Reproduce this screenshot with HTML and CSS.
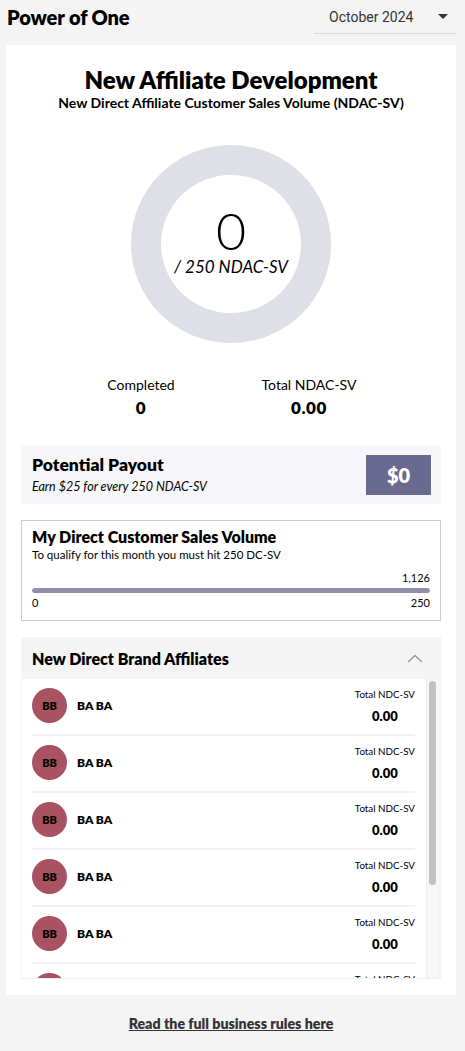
FILE: index.html
```html
<!DOCTYPE html>
<html>
<head>
<meta charset="utf-8">
<link rel="stylesheet" href="styles.css">
</head>
<body>
<header class="top">
  <h1 class="brand">Power of One</h1>
  <div class="month">
    <span class="month-label">October 2024</span>
    <svg class="caret" width="10" height="5" viewBox="0 0 10 5"><path d="M0 0h10L5 5z" fill="#333"/></svg>
  </div>
</header>

<main class="card">
  <h2 class="title">New Affiliate Development</h2>
  <p class="subtitle">New Direct Affiliate Customer Sales Volume (NDAC-SV)</p>

  <div class="donut">
    <div class="donut-inner">
      <span class="donut-value">0</span>
      <span class="donut-goal">/ 250 NDAC-SV</span>
    </div>
  </div>

  <div class="stats">
    <div class="stat">
      <span class="stat-label">Completed</span>
      <span class="stat-value">0</span>
    </div>
    <div class="stat">
      <span class="stat-label">Total NDAC-SV</span>
      <span class="stat-value">0.00</span>
    </div>
  </div>

  <section class="payout">
    <div class="payout-text">
      <h3 class="payout-title">Potential Payout</h3>
      <p class="payout-note">Earn $25 for every 250 NDAC-SV</p>
    </div>
    <div class="payout-amount">$0</div>
  </section>

  <section class="volume">
    <h3 class="volume-title">My Direct Customer Sales Volume</h3>
    <p class="volume-note">To qualify for this month you must hit 250 DC-SV</p>
    <div class="volume-current">1,126</div>
    <div class="bar"><div class="bar-fill" style="width:100%"></div></div>
    <div class="bar-scale"><span>0</span><span>250</span></div>
  </section>

  <section class="aff">
    <div class="aff-head">
      <h3 class="aff-title">New Direct Brand Affiliates</h3>
      <svg class="chev" width="16" height="9" viewBox="0 0 16 9"><path d="M1 8L8 1.5L15 8" fill="none" stroke="#9a9a9a" stroke-width="1.6"/></svg>
    </div>
    <div class="aff-body">
      <div class="aff-list">
        <div class="row"><div class="avatar">BB</div><div class="name">BA BA</div><div class="sv"><span class="sv-label">Total NDC-SV</span><span class="sv-value">0.00</span></div></div>
        <div class="row"><div class="avatar">BB</div><div class="name">BA BA</div><div class="sv"><span class="sv-label">Total NDC-SV</span><span class="sv-value">0.00</span></div></div>
        <div class="row"><div class="avatar">BB</div><div class="name">BA BA</div><div class="sv"><span class="sv-label">Total NDC-SV</span><span class="sv-value">0.00</span></div></div>
        <div class="row"><div class="avatar">BB</div><div class="name">BA BA</div><div class="sv"><span class="sv-label">Total NDC-SV</span><span class="sv-value">0.00</span></div></div>
        <div class="row"><div class="avatar">BB</div><div class="name">BA BA</div><div class="sv"><span class="sv-label">Total NDC-SV</span><span class="sv-value">0.00</span></div></div>
        <div class="row"><div class="avatar">BB</div><div class="name">BA BA</div><div class="sv"><span class="sv-label">Total NDC-SV</span><span class="sv-value">0.00</span></div></div>
      </div>
      <div class="track"><div class="thumb"></div></div>
    </div>
  </section>
</main>

<footer class="foot">
  <a class="rules" href="#">Read the full business rules here</a>
</footer>
</body>
</html>
```

FILE: styles.css
```css
* { box-sizing: border-box; }
html, body { margin: 0; padding: 0; }
body {
  background: #f4f4f4;
  font-family: "Lato", "Liberation Sans", sans-serif;
  color: #000;
  padding: 0 9px 0 6px;
}
h1, h2, h3, p { margin: 0; }

.top {
  display: flex;
  justify-content: space-between;
  align-items: flex-start;
  height: 45px;
}
.brand {
  font-size: 20px;
  font-weight: 800;
  margin: 5px 0 0 1px;
  letter-spacing: -0.1px;
}
.month {
  width: 142px;
  height: 34px;
  border-bottom: 1px solid #dcdcdc;
  display: flex;
  align-items: center;
  justify-content: space-between;
  padding: 0 8px 0 15px;
}
.month-label {
  font-family: "Roboto", "Liberation Sans", sans-serif;
  font-size: 14px;
  color: #333;
  padding-top: 1px;
}
.caret { margin-top: -1px; }

.card {
  background: #fff;
  padding: 21px 15px 16px;
  display: flex;
  flex-direction: column;
  align-items: stretch;
  height: 950px;
}
.title {
  text-align: center;
  font-size: 24px;
  font-weight: 800;
  line-height: 28px;
}
.subtitle {
  text-align: center;
  font-size: 14px;
  font-weight: 700;
  line-height: 17px;
  margin-top: 0;
}

.donut {
  width: 200px;
  height: 200px;
  border-radius: 50%;
  border: 30px solid #dfe0e7;
  margin: 34px auto 0;
  display: flex;
  align-items: center;
  justify-content: center;
}
.donut-inner {
  display: flex;
  flex-direction: column;
  align-items: center;
  margin-top: -6px;
}
.donut-value {
  font-size: 52px;
  font-weight: 300;
  line-height: 50px;
}
.donut-goal {
  font-size: 17px;
  font-style: italic;
  line-height: 20px;
  margin-top: 2px;
}

.stats {
  display: flex;
  justify-content: center;
  gap: 38px;
  padding-right: 12px;
  margin-top: 34px;
}
.stat {
  width: 130px;
  display: flex;
  flex-direction: column;
  align-items: center;
}
.stat-label { font-size: 14px; line-height: 16px; }
.stat-value { font-size: 17px; font-weight: 800; line-height: 18px; margin-top: 6px; letter-spacing: 0.6px; }

.payout {
  margin-top: 28px;
  background: #f7f7f9;
  height: 60px;
  display: flex;
  align-items: center;
  justify-content: space-between;
  padding: 0 10px 0 11px;
}
.payout-title { font-size: 17.5px; font-weight: 800; line-height: 20px; }
.payout-note { font-size: 12.5px; font-style: italic; line-height: 14px; margin-top: 5px; }
.payout-amount {
  width: 65px;
  height: 40px;
  background: #6a6a91;
  color: #fff;
  font-size: 20px;
  font-weight: 800;
  display: flex;
  align-items: center;
  justify-content: center;
}

.volume {
  margin-top: 16px;
  border: 1px solid #cccccc;
  height: 102px;
  padding: 6px 10px 0 10px;
}
.volume-title { font-size: 16px; font-weight: 800; line-height: 19px; }
.volume-note { font-size: 11.5px; line-height: 13px; margin-top: 2px; }
.volume-current { text-align: right; font-size: 11px; line-height: 13px; margin-top: 10px; }
.bar {
  height: 5px;
  background: #e4e4ec;
  border-radius: 3px;
  margin-top: 4px;
  overflow: hidden;
}
.bar-fill { height: 100%; background: #9090ad; border-radius: 3px; }
.bar-scale {
  display: flex;
  justify-content: space-between;
  font-size: 11px;
  line-height: 13px;
  margin-top: 3px;
}

.aff {
  margin-top: 16px;
  background: #f4f4f4;
  padding: 0 3px 0 1px;
  border-bottom: 1px solid #eeeeee;
}
.aff-head {
  height: 42px;
  display: flex;
  align-items: center;
  justify-content: space-between;
  padding: 0 15px 0 10px;
}
.aff-title { font-size: 16px; font-weight: 800; }
.aff-body {
  display: flex;
  background: #fff;
  height: 299px;
}
.aff-list {
  flex: 1;
  overflow: hidden;
  padding: 0 11px 0 10px;
}
.track {
  width: 12px;
  background: #f7f7f7;
  border-left: 1px solid #ececec;
  padding: 2px 2px 0 2px;
}
.thumb {
  height: 204px;
  background: #c1c1c1;
  border-radius: 4px;
}
.row {
  display: flex;
  align-items: center;
  padding: 9px 0 11px;
  border-bottom: 2px solid #f2f2f2;
}
.avatar {
  width: 35px;
  height: 35px;
  border-radius: 50%;
  background: #a95262;
  font-size: 11px;
  font-weight: 800;
  display: flex;
  align-items: center;
  justify-content: center;
  flex-shrink: 0;
}
.name {
  flex: 1;
  font-size: 12px;
  font-weight: 800;
  margin-left: 10px;
}
.sv {
  display: flex;
  flex-direction: column;
  align-items: center;
}
.sv-label { font-size: 9.8px; line-height: 12px; }
.sv-value { font-size: 13px; font-weight: 800; line-height: 14px; margin-top: 9px; }

.foot {
  display: flex;
  justify-content: center;
  padding-top: 20px;
}
.rules {
  color: #333;
  font-size: 14.2px;
  font-weight: 800;
  text-decoration: underline;
}
```
